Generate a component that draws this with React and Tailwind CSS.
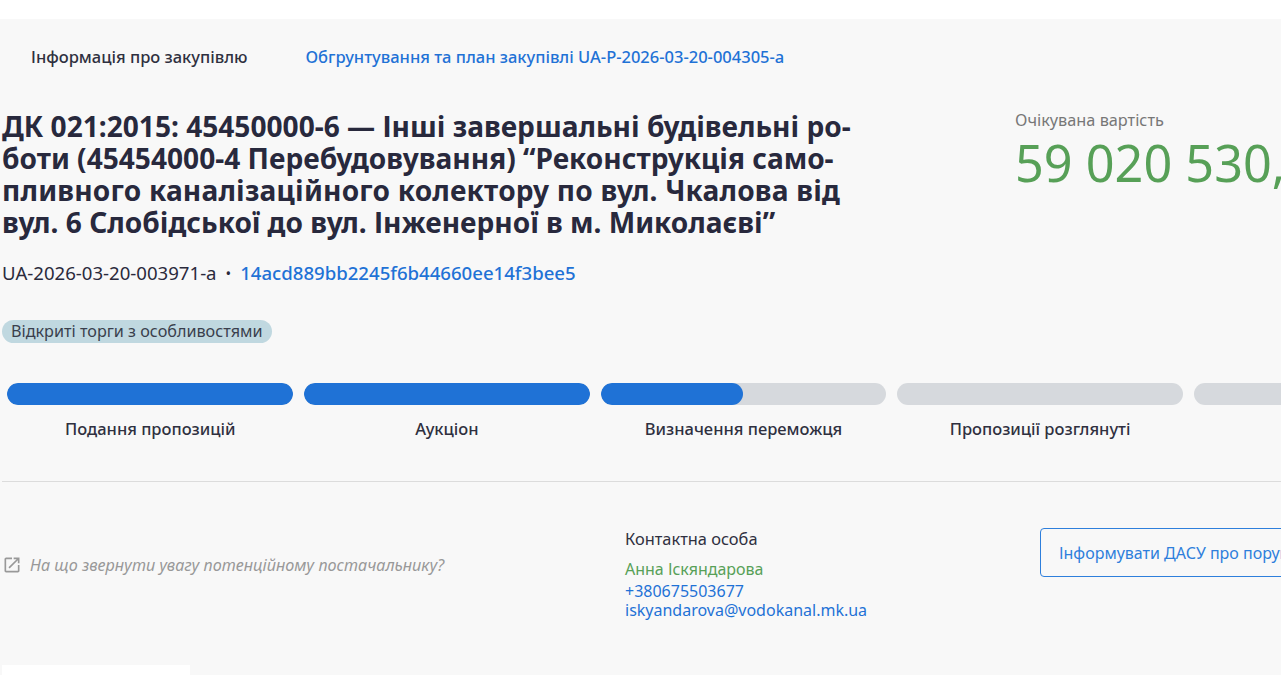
import React from "react";

const steps = [
  { label: "Подання пропозицій", fill: "w-full" },
  { label: "Аукціон", fill: "w-full" },
  { label: "Визначення переможця", fill: "w-1/2" },
  { label: "Пропозиції розглянуті", fill: "w-0" },
  { label: "Завершено", fill: "w-0" },
];

const App = () => {
  return (
    <div className="h-[675px] w-[1281px] overflow-hidden bg-white pt-[19px] font-['Noto_Sans',sans-serif] text-[#2a2a3c]">
      <div className="h-[656px] bg-[#f8f8f8] pl-[2px]">
        {/* Tabs */}
        <div className="flex h-[76px] items-center pl-[29px] text-[16.5px] font-medium">
          <span className="text-[#2f3040]">Інформація про закупівлю</span>
          <a className="ml-[58px] whitespace-nowrap text-[#1f72d6]">
            Обгрунтування та план закупівлі UA-P-2026-03-20-004305-a
          </a>
        </div>

        {/* Title and price */}
        <div className="flex">
          <div className="w-[1013px] shrink-0">
            <h1 className="mt-[15px] w-[900px] text-[28.1px] leading-[32px] font-bold text-[#28293d]">
              ДК 021:2015: 45450000-6 — Інші завершальні будівельні ро-
              <br />
              боти (45454000-4 Перебудовування) “Реконструкція само-
              <br />
              <span className="tracking-[0.2px]">пливного каналізаційного колектору по вул. Чкалова від</span>
              <br />
              вул. 6 Слобідської до вул. Інженерної в м. Миколаєві”
            </h1>
            <div className="mt-[23px] flex items-center text-[18.6px] leading-[24px] whitespace-nowrap">
              <span>UA-2026-03-20-003971-a</span>
              <span className="mx-[9px] text-[15px]">•</span>
              <a className="font-medium text-[#1f72d6]">14acd889bb2245f6b44660ee14f3bee5</a>
            </div>
            <span className="mt-[35px] inline-block h-[23px] rounded-full bg-[#c0d8e0] pl-[9px] pr-[9px] text-[16.2px] leading-[23px] whitespace-nowrap text-[#3a3f4d]">
              Відкриті торги з особливостями
            </span>
          </div>
          <div className="whitespace-nowrap">
            <div className="mt-[14px] text-[16.3px] leading-[22px] text-[#777]">Очікувана вартість</div>
            <div className="mt-[2px] text-[50.4px] leading-[60px] text-[#57a057]">59 020 530,00 UAH</div>
          </div>
        </div>

        {/* Status progress */}
        <div className="mt-[40px] flex w-[1490px]">
          {steps.map((step) => (
            <div key={step.label} className="w-[296.6px] shrink-0 px-[5.4px]">
              <div className="h-[22px] overflow-hidden rounded-full bg-[#d6d9dd]">
                <div className={`h-full rounded-full bg-[#1f72d6] ${step.fill}`} />
              </div>
              <div className="mt-[13px] text-center text-[16.5px] leading-[22px] font-medium text-[#2f3040]">
                {step.label}
              </div>
            </div>
          ))}
        </div>

        <div className="mt-[41px] h-px w-full bg-[#dcdcdc]" />

        {/* Contacts row */}
        <div className="flex">
          <div className="flex h-[166px] w-[623px] shrink-0 items-center gap-[8px] text-[#999]">
            <svg width="20" height="20" viewBox="0 0 24 24" fill="currentColor">
              <path d="M19 19H5V5h7V3H5c-1.11 0-2 .9-2 2v14c0 1.1.89 2 2 2h14c1.1 0 2-.9 2-2v-7h-2v7zM14 3v2h3.59l-9.83 9.83 1.41 1.41L19 6.41V10h2V3h-7z" />
            </svg>
            <i className="text-[16.2px] whitespace-nowrap">На що звернути увагу потенційному постачальнику?</i>
          </div>
          <div className="w-[415px] shrink-0 pt-[45px] text-[16px] leading-[20px] whitespace-nowrap">
            <div className="mb-[8px] text-[16.4px] leading-[24px] text-[#2f3040]">Контактна особа</div>
            <div className="mb-[3px] text-[#57a057]">Анна Іскяндарова</div>
            <div className="leading-[18px] text-[#1f72d6]">+380675503677</div>
            <div className="text-[#1f72d6]">iskyandarova@vodokanal.mk.ua</div>
          </div>
          <div className="pt-[46px]">
            <button className="h-[49px] rounded-[4px] border border-[#2e7fdc] px-[18px] text-[16px] whitespace-nowrap text-[#2e7fdc]">
              Інформувати ДАСУ про порушення
            </button>
          </div>
        </div>

        {/* Tab start at the bottom */}
        <div className="mt-[17px] h-[30px] w-[188px] bg-white" />
      </div>
    </div>
  );
};

export default App;
